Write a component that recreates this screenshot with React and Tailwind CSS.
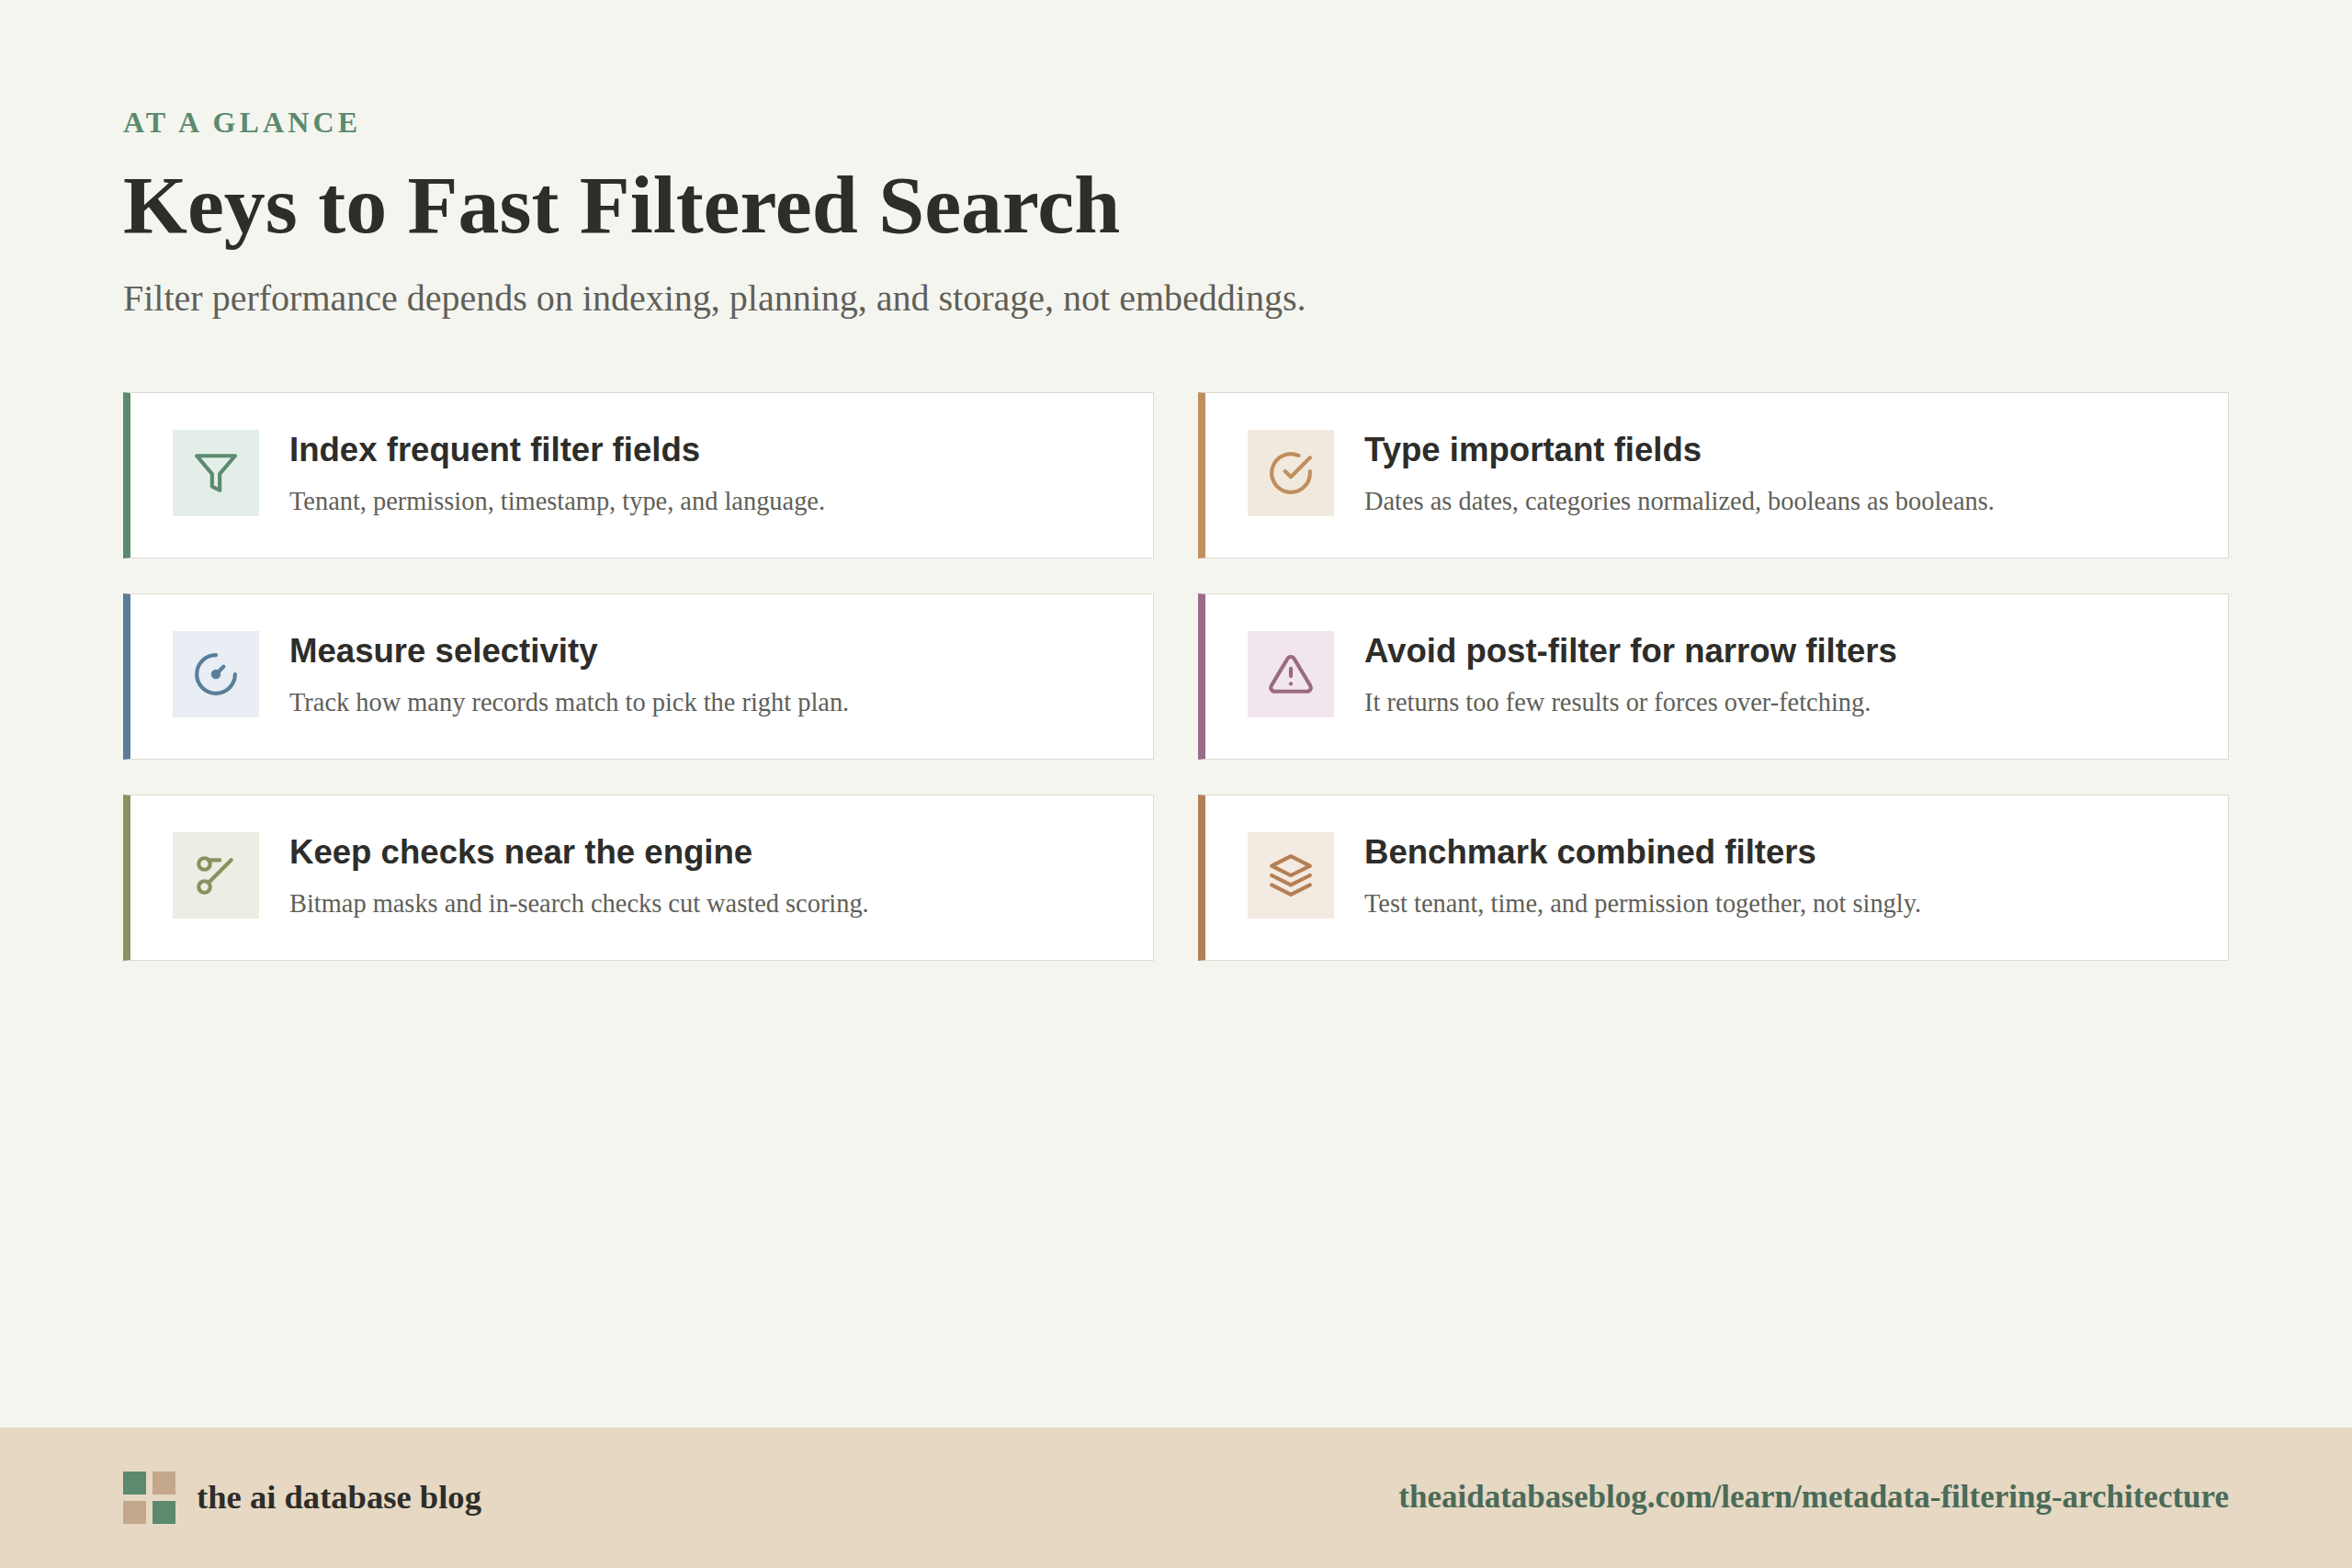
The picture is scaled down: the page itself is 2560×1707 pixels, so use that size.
import React from "react";

const Icon = ({ children }) => (
  <svg width="50" height="50" viewBox="0 0 24 24" fill="none" stroke="currentColor" strokeWidth="2" strokeLinecap="round" strokeLinejoin="round">
    {children}
  </svg>
);

const cards = [
  {
    title: "Index frequent filter fields",
    body: "Tenant, permission, timestamp, type, and language.",
    bar: "border-l-[#5b8a6f]",
    bg: "bg-[#e4eee8]",
    fg: "text-[#5b8a6f]",
    icon: <polygon points="22 3 2 3 10 12.46 10 19 14 21 14 12.46 22 3" />,
  },
  {
    title: "Type important fields",
    body: "Dates as dates, categories normalized, booleans as booleans.",
    bar: "border-l-[#c08f5e]",
    bg: "bg-[#f2e9de]",
    fg: "text-[#c08f5e]",
    icon: (
      <>
        <path d="M22 11.08V12a10 10 0 1 1-5.93-9.14" />
        <polyline points="22 4 12 14.01 9 11.01" />
      </>
    ),
  },
  {
    title: "Measure selectivity",
    body: "Track how many records match to pick the right plan.",
    bar: "border-l-[#5a7d9a]",
    bg: "bg-[#e8eef4]",
    fg: "text-[#5a7d9a]",
    icon: (
      <>
        <path d="M12 2a10 10 0 1 0 10 10" />
        <circle cx="12" cy="12" r="1.5" fill="currentColor" />
        <path d="M12 12l4-4" />
      </>
    ),
  },
  {
    title: "Avoid post-filter for narrow filters",
    body: "It returns too few results or forces over-fetching.",
    bar: "border-l-[#9b6a8a]",
    bg: "bg-[#f1e6ed]",
    fg: "text-[#9b6a82]",
    icon: (
      <>
        <path d="M10.29 3.86L1.82 18a2 2 0 0 0 1.71 3h16.94a2 2 0 0 0 1.71-3L13.71 3.86a2 2 0 0 0-3.42 0z" />
        <line x1="12" y1="9" x2="12" y2="13" />
        <line x1="12" y1="17" x2="12.01" y2="17" />
      </>
    ),
  },
  {
    title: "Keep checks near the engine",
    body: "Bitmap masks and in-search checks cut wasted scoring.",
    bar: "border-l-[#8a9160]",
    bg: "bg-[#ebeee2]",
    fg: "text-[#8a9160]",
    icon: (
      <>
        <circle cx="6" cy="6" r="3" />
        <circle cx="6" cy="18" r="3" />
        <path d="M8 4h6" />
        <line x1="20" y1="4" x2="8.12" y2="15.88" />
      </>
    ),
  },
  {
    title: "Benchmark combined filters",
    body: "Test tenant, time, and permission together, not singly.",
    bar: "border-l-[#b57f55]",
    bg: "bg-[#f3eae1]",
    fg: "text-[#b57f55]",
    icon: (
      <>
        <polygon points="12 2 2 7 12 12 22 7 12 2" />
        <polyline points="2 17 12 22 22 17" />
        <polyline points="2 12 12 17 22 12" />
      </>
    ),
  },
];

export default function App() {
  return (
    <div className="w-[2560px] h-[1707px] flex flex-col bg-[#f5f5f0] font-['Liberation_Serif',serif]">
      <div className="flex-1 px-[134px] pt-[113px]">
        <p className="text-[32px] leading-[40px] font-bold tracking-[4.1px] text-[#5b8a6f]">AT A GLANCE</p>
        <h1 className="mt-[20px] text-[89.9px] leading-[100px] font-bold text-[#2d2d2a]">Keys to Fast Filtered Search</h1>
        <p className="mt-[28px] text-[40px] leading-[48px] text-[#5f5f58]">Filter performance depends on indexing, planning, and storage, not embeddings.</p>
        <div className="mt-[78px] grid grid-cols-2 gap-x-[48px] gap-y-[38px]">
          {cards.map((c) => (
            <div key={c.title} className={`h-[181px] flex gap-[33px] bg-white border border-[#ddd9d0] border-l-[8px] pl-[46px] pt-[40px] ${c.bar}`}>
              <div className={`w-[94px] h-[94px] flex items-center justify-center ${c.bg} ${c.fg}`}>
                <Icon>{c.icon}</Icon>
              </div>
              <div>
                <p className="font-['Liberation_Sans',sans-serif] text-[36.6px] leading-[44px] font-bold text-[#2d2d2a]">{c.title}</p>
                <p className="mt-[16px] text-[28.4px] leading-[36px] text-[#5f5f58]">{c.body}</p>
              </div>
            </div>
          ))}
        </div>
      </div>
      <div className="h-[153px] bg-[#e6d8c3] px-[134px] flex items-center justify-between">
        <div className="flex items-center gap-[23px]">
          <div className="grid grid-cols-[25px_25px] gap-[7px]">
            <div className="h-[25px] bg-[#5b8a6f]" />
            <div className="h-[25px] bg-[#c4a88c]" />
            <div className="h-[25px] bg-[#c4a88c]" />
            <div className="h-[25px] bg-[#5b8a6f]" />
          </div>
          <span className="text-[36.6px] font-bold text-[#2d2d2a]">the ai database blog</span>
        </div>
        <span className="text-[35px] font-bold text-[#4a6b58]">theaidatabaseblog.com/learn/metadata-filtering-architecture</span>
      </div>
    </div>
  );
}
